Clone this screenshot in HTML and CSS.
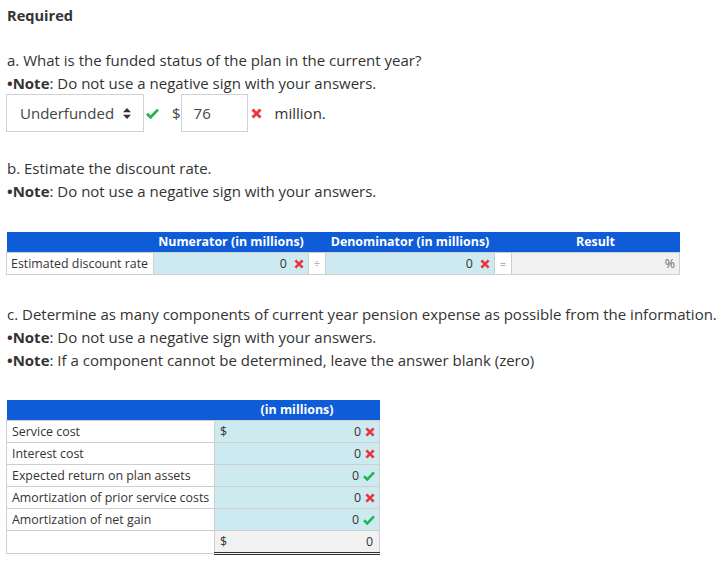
FILE: index.html
```html
<!DOCTYPE html>
<html>
<head>
<meta charset="utf-8">
<link rel="stylesheet" href="styles.css">
</head>
<body>
<div class="page">
  <div class="req">Required</div>

  <div class="part part-a">
    <p class="q">a. What is the funded status of the plan in the current year?</p>
    <p class="q"><span class="dot">•</span><b>Note</b>: Do not use a negative sign with your answers.</p>
    <div class="answer-row">
      <div class="select">Underfunded <span class="updown"><svg width="8" height="11" viewBox="0 0 8 11"><path d="M4 0L8 4.2H0Z M4 11L0 6.8H8Z" fill="#333"/></svg></span></div>
      <span class="mark ok"><svg width="13" height="11" viewBox="0 0 13 11"><path d="M1 5.8L4.6 9.3L12 1.6" fill="none" stroke="#1fb653" stroke-width="2.8"/></svg></span>
      <span class="cur">$</span>
      <div class="input">76</div>
      <span class="mark bad"><svg width="11" height="11" viewBox="0 0 11 11"><path d="M1.5 1.5L9.5 9.5M9.5 1.5L1.5 9.5" stroke="#e8373d" stroke-width="3"/></svg></span>
      <span class="unit">million.</span>
    </div>
  </div>

  <div class="part part-b">
    <p class="q">b. Estimate the discount rate.</p>
    <p class="q"><span class="dot">•</span><b>Note</b>: Do not use a negative sign with your answers.</p>
  </div>

  <table class="t1">
    <colgroup>
      <col class="w-lab"><col class="w-num"><col class="w-op"><col class="w-den"><col class="w-op"><col class="w-res">
    </colgroup>
    <tr class="hd">
      <th></th>
      <th>Numerator (in millions)</th>
      <th></th>
      <th>Denominator (in millions)</th>
      <th></th>
      <th>Result</th>
    </tr>
    <tr>
      <td class="lab">Estimated discount rate</td>
      <td class="val">0 <svg class="ic" width="10" height="10" viewBox="0 0 11 11"><path d="M1.5 1.5L9.5 9.5M9.5 1.5L1.5 9.5" stroke="#e8373d" stroke-width="3"/></svg></td>
      <td class="op">÷</td>
      <td class="val">0 <svg class="ic" width="10" height="10" viewBox="0 0 11 11"><path d="M1.5 1.5L9.5 9.5M9.5 1.5L1.5 9.5" stroke="#e8373d" stroke-width="3"/></svg></td>
      <td class="op">=</td>
      <td class="res">%</td>
    </tr>
  </table>

  <div class="part part-c">
    <p class="q">c. Determine as many components of current year pension expense as possible from the information.</p>
    <p class="q"><span class="dot">•</span><b>Note</b>: Do not use a negative sign with your answers.</p>
    <p class="q"><span class="dot">•</span><b>Note</b>: If a component cannot be determined, leave the answer blank (zero)</p>
  </div>

  <table class="t2">
    <colgroup>
      <col class="w2-lab"><col class="w2-val">
    </colgroup>
    <tr class="hd">
      <th></th>
      <th>(in millions)</th>
    </tr>
    <tr>
      <td class="lab">Service cost</td>
      <td class="val2"><span class="d">$</span><span class="n">0</span><svg class="ic" width="10" height="10" viewBox="0 0 11 11"><path d="M1.5 1.5L9.5 9.5M9.5 1.5L1.5 9.5" stroke="#e8373d" stroke-width="3"/></svg></td>
    </tr>
    <tr>
      <td class="lab">Interest cost</td>
      <td class="val2"><span class="n">0</span><svg class="ic" width="10" height="10" viewBox="0 0 11 11"><path d="M1.5 1.5L9.5 9.5M9.5 1.5L1.5 9.5" stroke="#e8373d" stroke-width="3"/></svg></td>
    </tr>
    <tr>
      <td class="lab">Expected return on plan assets</td>
      <td class="val2"><span class="n">0</span><svg class="ic" width="12" height="10" viewBox="0 0 13 11"><path d="M1 5.8L4.6 9.3L12 1.6" fill="none" stroke="#1fb653" stroke-width="2.8"/></svg></td>
    </tr>
    <tr>
      <td class="lab">Amortization of prior service costs</td>
      <td class="val2"><span class="n">0</span><svg class="ic" width="10" height="10" viewBox="0 0 11 11"><path d="M1.5 1.5L9.5 9.5M9.5 1.5L1.5 9.5" stroke="#e8373d" stroke-width="3"/></svg></td>
    </tr>
    <tr>
      <td class="lab">Amortization of net gain</td>
      <td class="val2"><span class="n">0</span><svg class="ic" width="12" height="10" viewBox="0 0 13 11"><path d="M1 5.8L4.6 9.3L12 1.6" fill="none" stroke="#1fb653" stroke-width="2.8"/></svg></td>
    </tr>
    <tr class="total">
      <td class="lab"></td>
      <td class="tot"><span class="d">$</span><span class="n">0</span></td>
    </tr>
  </table>
</div>
</body>
</html>
```

FILE: styles.css
```css
html, body {
  margin: 0;
  padding: 0;
  background: #fff;
}
body {
  font-family: "Open Sans", "DejaVu Sans", sans-serif;
  color: #333;
}
.page {
  padding: 4px 0 0 6px;
}
.req {
  font-size: 14.6px;
  font-weight: bold;
  line-height: 22px;
  padding-left: 1px;
  color: #333;
}
.part-a {
  margin-top: 23px;
}
.q {
  margin: 0;
  font-size: 15px;
  line-height: 23px;
  padding-left: 1px;
  color: #333;
}
.q b {
  font-weight: bold;
}
.dot {
  font-weight: bold;
}
.answer-row {
  display: flex;
  align-items: center;
  margin-top: -1px;
  height: 38px;
}
.select {
  box-sizing: border-box;
  width: 138px;
  height: 38px;
  border: 1px solid #ccd3da;
  display: flex;
  align-items: center;
  padding-left: 13px;
  font-size: 15px;
  color: #444;
}
.updown {
  margin-left: 9px;
  display: flex;
}
.mark {
  display: flex;
  align-items: center;
}
.ok {
  margin-left: 2px;
}
.cur {
  margin-left: 13px;
  font-size: 15px;
  color: #444;
}
.input {
  box-sizing: border-box;
  width: 67px;
  height: 38px;
  border: 1px solid #ccd3da;
  display: flex;
  align-items: center;
  padding-left: 12px;
  font-size: 15px;
  color: #444;
  margin-left: 0;
}
.bad {
  margin-left: 3px;
}
.unit {
  margin-left: 13px;
  font-size: 15px;
  color: #333;
}
.part-b {
  margin-top: 25px;
}
table {
  border-collapse: collapse;
  font-size: 12.4px;
  color: #333;
}
.t1 {
  margin-top: 29px;
  width: 673px;
  table-layout: fixed;
}
.w-lab { width: 147px; }
.w-num { width: 155px; }
.w-op { width: 17px; }
.w-den { width: 169px; }
.w-res { width: 168px; }
.hd th {
  background: #0f5cd9;
  color: #fff;
  font-weight: bold;
  height: 20px;
  padding: 0;
  line-height: 20px;
  text-align: center;
  white-space: nowrap;
}
.t1 td {
  height: 21px;
  padding: 0;
  border: 1px solid #cfcfcf;
  line-height: 20px;
}
.t1 .lab {
  padding-left: 4px;
  background: #fff;
}
.t1 .val {
  background: #cdeaf1;
  text-align: right;
  padding-right: 4px;
}
.t1 .op {
  background: #fff;
  text-align: center;
  color: #777;
  font-size: 11px;
}
.t1 .res {
  background: #f1f1f1;
  text-align: right;
  padding-right: 4px;
  color: #666;
}
.ic {
  vertical-align: -1px;
  margin-left: 4px;
}
.part-c {
  margin-top: 28px;
}
.t2 {
  margin-top: 28px;
  width: 373px;
  table-layout: fixed;
}
.w2-lab { width: 208px; }
.w2-val { width: 165px; }
.t2 td {
  height: 21px;
  padding: 0;
  border: 1px solid #cfcfcf;
  line-height: 21px;
}
.t2 .lab {
  padding-left: 5px;
  background: #fff;
  white-space: nowrap;
}
.val2, .tot {
  background: #cdeaf1;
  padding: 0 4px 0 5px !important;
  text-align: right;
}
.val2 .d, .tot .d {
  float: left;
}
.t2 .tot {
  background: #f1f1f1;
  border-top: 1px solid #222;
  border-bottom: 3px double #333;
}
.t2 .tot .n {
  padding-right: 2px;
}
```
